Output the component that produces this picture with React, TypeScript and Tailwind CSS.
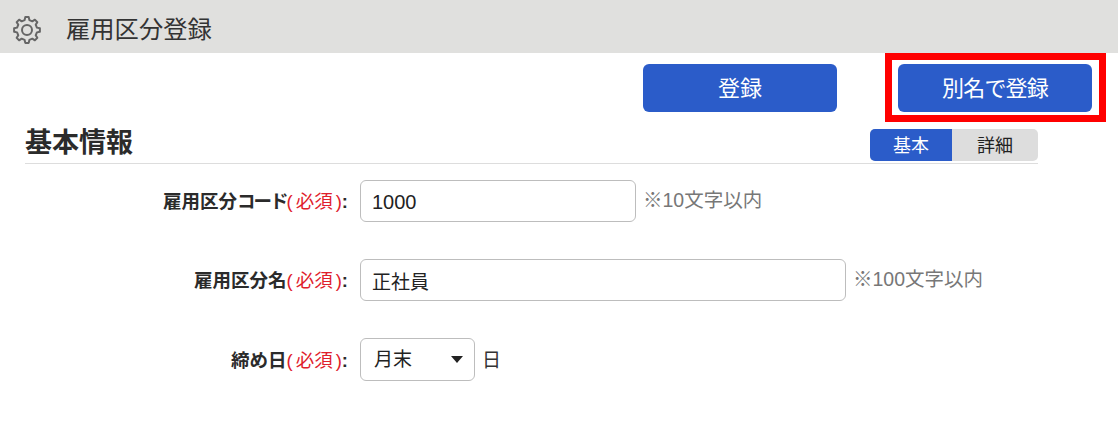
import React from 'react';

const font = "font-['Liberation_Sans','Noto_Sans_CJK_JP',sans-serif]";

// 8 tooth gear outline, built from polar points
function gearPath() {
  const teeth = 8;
  const cx = 14;
  const cy = 14;
  const outer = 13;
  const inner = 10.2;
  const pts: string[] = [];
  for (let i = 0; i < teeth; i++) {
    const a = (i * 2 * Math.PI) / teeth;
    const step = (2 * Math.PI) / teeth;
    const offsets = [
      [-0.3, inner],
      [-0.17, outer],
      [0.17, outer],
      [0.3, inner],
    ];
    offsets.forEach(([o, r]) => {
      const t = a + o * step;
      pts.push(`${(cx + r * Math.sin(t)).toFixed(2)} ${(cy - r * Math.cos(t)).toFixed(2)}`);
    });
  }
  return `M${pts.join('L')}Z`;
}

function GearIcon() {
  return (
    <svg width="28" height="28" viewBox="0 0 28 28" fill="none" stroke="#666" strokeWidth="2" strokeLinejoin="round">
      <path d={gearPath()} />
      <circle cx="14" cy="14" r="5" />
    </svg>
  );
}

function Label({ children }: { children: React.ReactNode }) {
  return (
    <div className="w-[323px] pt-[2px] text-right text-[18.5px] font-bold text-[#2b2b2b] whitespace-nowrap">
      {children}
      <span className="font-normal text-[#e0202c]">
        <span className="pr-[3px]">(</span>必須<span className="pl-[3px]">)</span>
      </span>
      :
    </div>
  );
}

function App() {
  return (
    <div className={`${font} w-[1118px] h-[427px] bg-white overflow-hidden`}>
      <div className="flex items-center h-[53px] bg-[#e0e0de] pl-[13px] pt-[6px]">
        <GearIcon />
        <div className="ml-[25px] mt-[1px] text-[24.3px] text-[#333]">雇用区分登録</div>
      </div>

      <div className="flex justify-end gap-[61px] pt-[11px] pr-[26px]">
        <button className="w-[194px] h-[48px] rounded-[6px] bg-[#2b5cc9] text-white text-[22px]">登録</button>
        <div className="relative">
          <button className="w-[194px] h-[48px] rounded-[6px] bg-[#2b5cc9] text-white text-[22px] tracking-[-0.8px]">別名で登録</button>
          <div className="absolute top-[-11px] left-[-13px] right-[-14px] bottom-[-10px] border-[7px] border-[#ff0000]" />
        </div>
      </div>

      <div className="flex items-start justify-between ml-[25px] w-[1013px] h-[35px] mt-[17px] border-b border-[#dddddd]">
        <div className="text-[27px] leading-[28px] font-bold text-[#2b2b2b]">基本情報</div>
        <div className="flex w-[168px] h-[32px] rounded-[5px] overflow-hidden text-[18px] bg-[#dddddd]">
          <div className="flex items-center justify-center w-[82px] pt-[2px] bg-[#2b5cc9] text-white">基本</div>
          <div className="flex items-center justify-center flex-1 pt-[2px] text-[#222]">詳細</div>
        </div>
      </div>

      <div className="flex flex-col gap-[37px] mt-[16px] ml-[25px]">
        <div className="flex items-center">
          <Label>雇用区分<span className="tracking-[-2px]">コード</span></Label>
          <input readOnly value="1000" className="ml-[12px] w-[276px] h-[42px] px-[11px] pt-[2px] text-[20px] text-[#222] border border-[#bdbdbd] rounded-[6px]" />
          <span className="ml-[7px] text-[19.5px] text-[#777]">※10文字以内</span>
        </div>
        <div className="flex items-center">
          <Label>雇用区分名</Label>
          <input readOnly value="正社員" className="ml-[12px] w-[486px] h-[42px] px-[11px] text-[19px] text-[#222] border border-[#bdbdbd] rounded-[6px]" />
          <span className="ml-[7px] text-[19.5px] text-[#777]">※100文字以内</span>
        </div>
        <div className="flex items-center">
          <Label>締め日</Label>
          <div className="relative flex items-center ml-[12px] w-[115px] h-[43px] pl-[13px] pt-[2px] text-[19px] text-[#222] border border-[#bdbdbd] rounded-[6px]">
            月末
            <span className="absolute right-[11px] top-[17px] w-0 h-0 border-x-[6px] border-x-transparent border-t-[7px] border-t-[#222]" />
          </div>
          <span className="ml-[7px] pt-[4px] text-[19px] text-[#333]">日</span>
        </div>
      </div>
    </div>
  );
}

export default App;
